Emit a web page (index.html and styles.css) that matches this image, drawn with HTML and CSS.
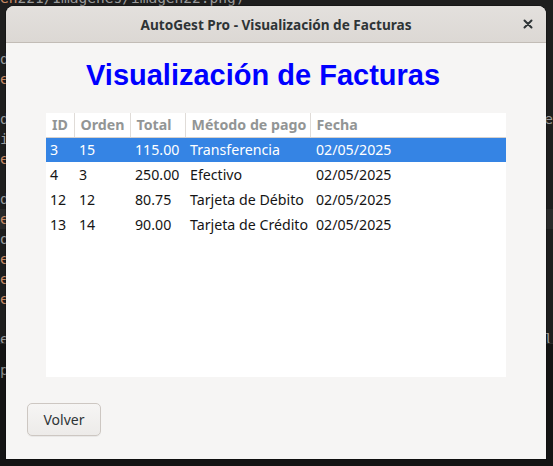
FILE: index.html
```html
<!DOCTYPE html>
<html lang="es">
<head>
<meta charset="utf-8">
<title>AutoGest Pro - Visualización de Facturas</title>
<link rel="stylesheet" href="styles.css">
</head>
<body>
<div class="desktop">
  <div class="editor">
    <div class="line first"><span class="kw">en</span>221/Imagenes/imagen22.png)</div>
    <div class="line"></div>
    <div class="line"></div>
    <div class="line">d</div>
    <div class="line"><span class="kw">e</span></div>
    <div class="line"></div>
    <div class="line split"><span>d</span><span>de</span></div>
    <div class="line">i</div>
    <div class="line"><span class="kw">e</span></div>
    <div class="line"></div>
    <div class="line">d</div>
    <div class="line cur"><span class="kw">e</span></div>
    <div class="line">o</div>
    <div class="line"><span class="kw">e</span></div>
    <div class="line"><span class="kw">e</span></div>
    <div class="line"><span class="kw">e</span></div>
    <div class="line"></div>
    <div class="line split"><span>e</span><span>l</span></div>
  </div>
  <div class="panel">
    <div class="line">p</div>
  </div>

  <div class="window">
    <header class="titlebar">
      <span class="title">AutoGest Pro - Visualización de Facturas</span>
      <button class="close" aria-label="Cerrar">
        <svg width="10" height="10" viewBox="0 0 10 10"><path d="M1.5 1.5 L8.5 8.5 M8.5 1.5 L1.5 8.5" stroke="#2e3436" stroke-width="2" stroke-linecap="round"/></svg>
      </button>
    </header>
    <main class="content">
      <h1 class="heading">Visualización de Facturas</h1>
      <div class="tree">
        <table>
          <colgroup>
            <col class="c-id"><col class="c-orden"><col class="c-total"><col class="c-metodo"><col>
          </colgroup>
          <thead>
            <tr><th>ID</th><th>Orden</th><th>Total</th><th>Método de pago</th><th>Fecha</th></tr>
          </thead>
          <tbody>
            <tr class="selected"><td>3</td><td>15</td><td>115.00</td><td>Transferencia</td><td>02/05/2025</td></tr>
            <tr><td>4</td><td>3</td><td>250.00</td><td>Efectivo</td><td>02/05/2025</td></tr>
            <tr><td>12</td><td>12</td><td>80.75</td><td>Tarjeta de Débito</td><td>02/05/2025</td></tr>
            <tr><td>13</td><td>14</td><td>90.00</td><td>Tarjeta de Crédito</td><td>02/05/2025</td></tr>
          </tbody>
        </table>
      </div>
      <div class="actions">
        <button class="btn">Volver</button>
      </div>
    </main>
  </div>
</div>
</body>
</html>
```

FILE: styles.css
```css
* { box-sizing: border-box; }
html, body { margin: 0; padding: 0; }
body {
  width: 553px;
  height: 466px;
  overflow: hidden;
  background: #1e1e1e;
  font-family: "Noto Sans", "DejaVu Sans", sans-serif;
}
.desktop {
  position: relative;
  width: 553px;
  height: 466px;
  display: flex;
  flex-direction: column;
}
.editor {
  background: #1e1e1e;
  height: 356px;
  margin-top: -13px;
  font-family: "DejaVu Sans Mono", monospace;
  font-size: 14.5px;
  color: #9a9a9a;
}
.line {
  height: 20px;
  line-height: 20px;
  white-space: pre;
}
.line.first { height: 22px; line-height: 22px; }
.line.split { display: flex; justify-content: space-between; }
.line.cur { background: #2a2a2a; }
.kw { color: #c98a64; }
.panel {
  flex: 1;
  background: #141414;
  border-top: 1px solid #2a2a2a;
  font-family: "DejaVu Sans Mono", monospace;
  font-size: 14.5px;
  color: #8a8a8a;
  padding-top: 16px;
}

.window {
  position: absolute;
  left: 6px;
  top: 6px;
  width: 540px;
  height: 453px;
  background: #f6f5f4;
  border-radius: 8px 8px 0 0;
  overflow: hidden;
  display: flex;
  flex-direction: column;
  box-shadow: 0 0 0 1px rgba(0,0,0,0.25);
}
.titlebar {
  height: 37px;
  flex: none;
  background: linear-gradient(#e3e0dd, #dcd8d4);
  border-bottom: 1px solid #c2bcb6;
  display: flex;
  align-items: center;
  justify-content: center;
  position: relative;
}
.title {
  font-weight: bold;
  font-size: 13.6px;
  color: #2e3436;
}
.close {
  position: absolute;
  right: 13px;
  top: 13px;
  width: 10px;
  height: 10px;
  padding: 0;
  border: 0;
  background: none;
  display: flex;
}
.content {
  flex: 1;
  display: flex;
  flex-direction: column;
}
.heading {
  margin: 16px 0 0 80px;
  font-family: "Liberation Sans", Arial, sans-serif;
  font-weight: bold;
  font-size: 29px;
  line-height: 32px;
  color: #0000ff;
}
.tree {
  margin: 22px 0 0 40px;
  width: 460px;
  height: 264px;
  background: #ffffff;
}
table {
  border-collapse: collapse;
  table-layout: fixed;
  width: 460px;
  font-size: 14.2px;
}
.c-id { width: 28px; }
.c-orden { width: 56px; }
.c-total { width: 55px; }
.c-metodo { width: 125px; }
th {
  height: 24px;
  padding: 0 0 0 6px;
  text-align: left;
  font-weight: bold;
  color: #929595;
  border-bottom: 1px solid #d6d1cd;
  border-left: 1px solid #e0dcd8;
  white-space: nowrap;
  overflow: hidden;
}
th:first-child { border-left: 0; }
td {
  height: 25px;
  padding: 0 0 0 4px;
  color: #151515;
  white-space: nowrap;
  overflow: hidden;
}
td + td { padding-left: 5px; }
td:last-child { padding-left: 6px; }
tr.selected td {
  background: #3584e4;
  color: #ffffff;
}
.actions {
  margin: 26px 0 0 21px;
}
.btn {
  width: 74px;
  height: 33px;
  border: 1px solid #cdc7c2;
  border-radius: 5px;
  background: linear-gradient(#f6f5f4, #edebe9);
  box-shadow: 0 1px 0 rgba(0,0,0,0.05);
  font-family: "Noto Sans", sans-serif;
  font-size: 14px;
  color: #2e3436;
  padding: 0;
}
```
